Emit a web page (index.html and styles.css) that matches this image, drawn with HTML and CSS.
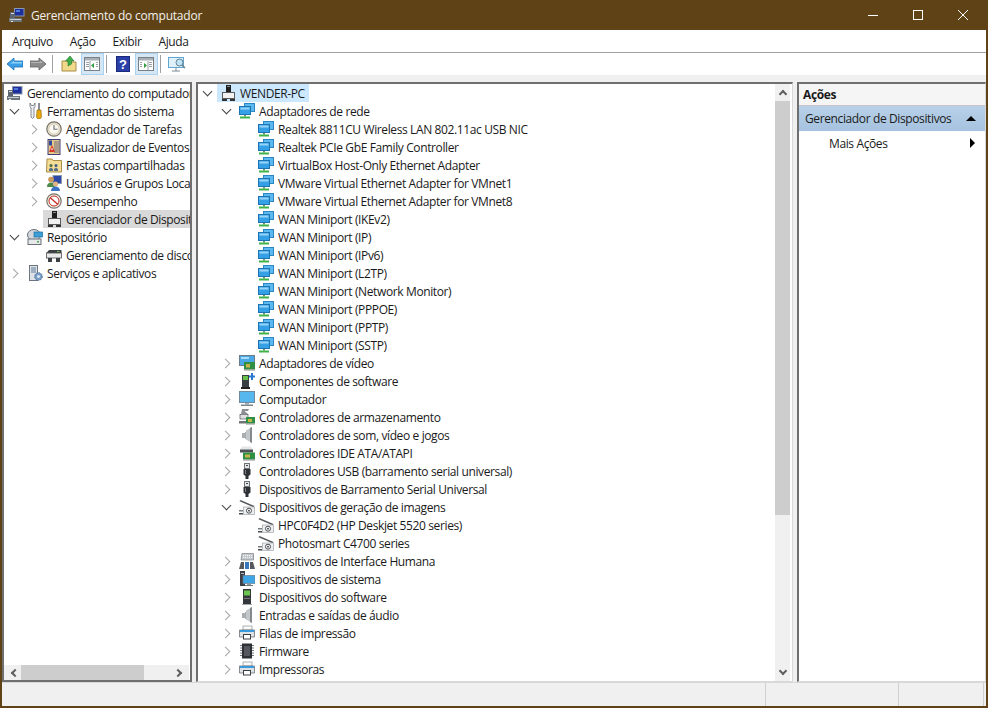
FILE: index.html
```html
<!DOCTYPE html>
<html>
<head>
    <meta charset="utf-8">
    <title>Gerenciamento do computador</title>
    <link rel="stylesheet" href="styles.css">
</head>
<body>
    <svg class="sprites" width="0" height="0">
        <symbol id="i-pc" viewBox="0 0 16 16">
            <rect x="5" y="1" width="10.500" height="8.500" fill="#8d99ad"/>
            <rect x="6" y="2" width="8.500" height="6.500" fill="#1d2f9c"/>
            <rect x="7" y="3" width="4" height="2" fill="#4f7bdc"/>
            <rect x="1" y="5" width="5" height="6" fill="#5d6670"/>
            <rect x="2" y="6" width="3" height="1" fill="#d8dde2"/>
            <rect x="0" y="11" width="13" height="4" fill="#6c747c"/>
            <rect x="1" y="12" width="11" height="1" fill="#c9ced3"/>
            <rect x="2" y="14" width="2" height="1" fill="#e8e8e8"/>
        </symbol>
        <symbol id="i-tools" viewBox="0 0 16 16">
            <path d="M3 0v3.500l1 1.500v9l1.500 1.500L7 14V5l1-1.500V0L6.500 2.500h-2z" fill="#eceff2" stroke="#6b6f75" stroke-width=".8"/>
            <rect x="11" y="0" width="2" height="7" fill="#8b8f95"/>
            <path d="M10 7h4l.5 7-1.500 2h-2l-1.500-2z" fill="#e8a90c" stroke="#8a6100" stroke-width=".6"/>
        </symbol>
        <symbol id="i-clock" viewBox="0 0 16 16">
            <circle cx="8" cy="8" r="7.200" fill="#ece4cc" stroke="#77736a" stroke-width="1.200"/>
            <circle cx="8" cy="8" r="5.200" fill="#faf8f0" stroke="#bdb59c" stroke-width=".6"/>
            <path d="M8 4v4.300h3.500" fill="none" stroke="#6b6f77" stroke-width="1.100"/>
        </symbol>
        <symbol id="i-events" viewBox="0 0 16 16">
            <rect x="2" y="0.500" width="12" height="15" fill="#e6c98a" stroke="#3f3f7c"/>
            <rect x="3" y="1.500" width="3" height="5" fill="#304a9c"/>
            <path d="M8 3h5M8 5h5M8 7h5M8 9h5M8 11h5M8 13h5" stroke="#6d6d8c"/>
            <path d="M6 6l3 7H3z" fill="#d83a2c"/>
            <rect x="5.500" y="9" width="1" height="2" fill="#fff"/>
        </symbol>
        <symbol id="i-shared" viewBox="0 0 16 16">
            <path d="M1 2h5l1 1.500h8.500V15H.500z" fill="#f3dc95" stroke="#a98c47"/>
            <circle cx="5" cy="8.500" r="1.500" fill="#4a6c3c"/>
            <circle cx="10" cy="8.500" r="1.500" fill="#3c5a8c"/>
            <path d="M3 14v-2l2-1.500 2 1.500v2zM8 14v-2l2-1.500 2 1.500v2z" fill="#59708a"/>
        </symbol>
        <symbol id="i-users" viewBox="0 0 16 16">
            <rect x="7" y="0.500" width="8.500" height="8" fill="#2d49a8" stroke="#8d99ad"/>
            <circle cx="5" cy="4.500" r="2.800" fill="#c9975c"/>
            <path d="M1 12c0-3 1.500-4.500 4-4.500S9 9 9 12z" fill="#4d8a4a"/>
            <circle cx="9.500" cy="9" r="2.500" fill="#e0b483"/>
            <path d="M5 16c0-3 2-4.500 4.500-4.500S14 13 14 16z" fill="#3a72c4"/>
        </symbol>
        <symbol id="i-perf" viewBox="0 0 16 16">
            <circle cx="8" cy="8" r="7.200" fill="#f4f0e6" stroke="#77736a" stroke-width="1.200"/>
            <circle cx="8" cy="8" r="5" fill="#fff" stroke="#c22b20"/>
            <path d="M4 4.500l8 7" stroke="#c22b20" stroke-width="1.300"/>
        </symbol>
        <symbol id="i-devmgr" viewBox="0 0 16 16">
            <rect x="6" y="0" width="5" height="7" fill="#1f1f1f"/>
            <rect x="7" y="1" width="3" height="1" fill="#8a8a8a"/>
            <rect x="2.500" y="7.500" width="12" height="6" fill="#f2f2f2" stroke="#5a5a5a"/>
            <rect x="2" y="14" width="5" height="2" fill="#333"/>
            <rect x="10" y="14" width="5" height="2" fill="#333"/>
        </symbol>
        <symbol id="i-repo" viewBox="0 0 16 16">
            <ellipse cx="7" cy="6" rx="6.500" ry="5.500" fill="#d4d8dc" stroke="#69707a"/>
            <rect x="7" y="3" width="8.500" height="5" fill="#3b9ed6" stroke="#1d6f9e" stroke-width=".7"/>
            <rect x="1" y="10" width="13" height="5.500" fill="#e6e8ea" stroke="#69707a"/>
            <rect x="10" y="12" width="2" height="1.500" fill="#45a84c"/>
        </symbol>
        <symbol id="i-disk" viewBox="0 0 16 16">
            <path d="M3 3h12.500v3H.500z" fill="#3c3f42"/>
            <rect x="11" y="4" width="2.500" height="1" fill="#67c04e"/>
            <rect x=".5" y="6" width="15" height="5" fill="#e8e8e8" stroke="#4d4d4d" stroke-width=".8"/>
            <rect x="2" y="11" width="4" height="4" fill="#3c3f42"/>
            <rect x="10" y="11" width="4" height="4" fill="#3c3f42"/>
        </symbol>
        <symbol id="i-services" viewBox="0 0 16 16">
            <rect x="2.500" y="0.500" width="8" height="15" fill="#dfe3e7" stroke="#6d7680"/>
            <path d="M4 3h5M4 5h5M4 7h5" stroke="#5f7c9e"/>
            <circle cx="11.500" cy="11.500" r="3.800" fill="#7aa0c9" stroke="#4b6c92" stroke-dasharray="1.500 1"/>
            <circle cx="11.500" cy="11.500" r="1.300" fill="#f2f6fa"/>
        </symbol>
        <symbol id="i-net" viewBox="0 0 16 16">
            <rect x="5.500" y="0.500" width="10" height="8" fill="#5cb9f0" stroke="#2a86c4"/>
            <rect x="0.500" y="3.500" width="11" height="8" fill="#35a0e6" stroke="#1b74b4"/>
            <rect x="1.500" y="4.500" width="9" height="2" fill="#96d5f8"/>
            <rect x="5" y="12" width="2" height="1.500" fill="#6e8f6a"/>
            <rect x="1" y="13.500" width="10" height="2" fill="#3fb44a"/>
        </symbol>
        <symbol id="i-video" viewBox="0 0 16 16">
            <rect x="0.500" y="0.500" width="15" height="10" fill="#4aa8e6" stroke="#6a7d8c"/>
            <rect x="2" y="2" width="8" height="2" fill="#a8dbf7"/>
            <rect x="5" y="7" width="11" height="7.500" fill="#2f8f45"/>
            <rect x="7" y="9" width="4" height="3.500" fill="#c9b44a"/>
            <rect x="5" y="14.500" width="11" height="1" fill="#8e8e8e"/>
        </symbol>
        <symbol id="i-softcomp" viewBox="0 0 16 16">
            <rect x="3" y="2" width="7" height="12" fill="#3a3f44"/>
            <rect x="4" y="3" width="5" height="4" fill="#66c24a"/>
            <rect x="2" y="14" width="9" height="2" fill="#222"/>
            <path d="M12 0v2.500h-2v2h2V7h2V4.500h2v-2h-2V0z" fill="#2a78d0"/>
        </symbol>
        <symbol id="i-computer" viewBox="0 0 16 16">
            <rect x="0.500" y="0.500" width="15" height="11" fill="#56b7ef" stroke="#6d8ca2"/>
            <rect x="6" y="12" width="4" height="1.500" fill="#a8aeb3"/>
            <rect x="2" y="13.500" width="12" height="1.500" fill="#7c858c"/>
        </symbol>
        <symbol id="i-storage" viewBox="0 0 16 16">
            <path d="M3 0h7l-1 2H5.500L9 5H2z" fill="#8b8f94"/>
            <rect x="1" y="5.500" width="8" height="4.500" fill="#dddfe1" stroke="#53585e" stroke-width=".7"/>
            <rect x="7" y="8" width="9" height="6.500" fill="#2f8f45"/>
            <rect x="9" y="10" width="4" height="3" fill="#c9b44a"/>
            <rect x="0" y="12" width="7" height="2.500" fill="#707478"/>
            <rect x="7" y="14.500" width="9" height="1" fill="#8e8e8e"/>
        </symbol>
        <symbol id="i-sound" viewBox="0 0 16 16">
            <path d="M3 6h3V5h1v7H6v-1H3z" fill="#a9adb1"/>
            <path d="M7 3.500L13 0v16l-6-3.500z" fill="#c3c7ca"/>
            <path d="M11 1l2-1v16l-2-1z" fill="#84898e"/>
        </symbol>
        <symbol id="i-ide" viewBox="0 0 16 16">
            <path d="M3 1.500h9l2 3H1z" fill="#e4e6e8"/>
            <rect x="1" y="4.500" width="13" height="3" fill="#4f5357"/>
            <rect x="4" y="7.500" width="12" height="7" fill="#2f8f45"/>
            <rect x="6" y="9.500" width="5" height="3" fill="#c9b44a"/>
            <rect x="4" y="14.500" width="12" height="1" fill="#8e8e8e"/>
        </symbol>
        <symbol id="i-usb" viewBox="0 0 16 16">
            <rect x="5.500" y="0.500" width="5" height="5" fill="#e2e4e6" stroke="#707478"/>
            <rect x="7" y="2" width="2" height="1" fill="#444"/>
            <path d="M4.500 6h7v5.500l-2 1.500v3h-3v-3l-2-1.500z" fill="#2e3135"/>
            <rect x="6" y="7" width="1" height="4" fill="#7b8086"/>
        </symbol>
        <symbol id="i-imaging" viewBox="0 0 16 16">
            <path d="M1.500 1l14 6-1 1.200L.5 2.200z" fill="#55595d"/>
            <rect x="4.500" y="8" width="11" height="7.500" fill="#eceeef" stroke="#a1a5a9" stroke-width=".7"/>
            <circle cx="10" cy="11.700" r="2.500" fill="#fff" stroke="#474b4f"/>
            <circle cx="10" cy="11.700" r=".9" fill="#333"/>
            <rect x="0" y="11" width="4" height="1.500" fill="#787c80"/>
            <rect x="0" y="14" width="4" height="1.500" fill="#45494d"/>
        </symbol>
        <symbol id="i-hid" viewBox="0 0 16 16">
            <path d="M3 .5h11.500V7H2z" fill="#c4c9ce" stroke="#7b8187" stroke-width=".7"/>
            <path d="M4 2.500h9M4 4.500h9" stroke="#f2f4f6" stroke-dasharray="1 1"/>
            <path d="M0 16l2-7h3v7z" fill="#55595e"/>
            <path d="M6 16V9h4v7z" fill="#3778bc"/>
            <path d="M11 16V9h3l2 7z" fill="#55595e"/>
        </symbol>
        <symbol id="i-system" viewBox="0 0 16 16">
            <rect x="1" y="0" width="5" height="15" fill="#3c4046"/>
            <rect x="2" y="2" width="3" height="1" fill="#b8bcc0"/>
            <rect x="4" y="4.500" width="12" height="8" fill="#3ea6e6" stroke="#6a7d8c" stroke-width=".7"/>
            <rect x="8" y="12.500" width="4" height="1.500" fill="#90979d"/>
            <rect x="6" y="14" width="8" height="1" fill="#6f777d"/>
        </symbol>
        <symbol id="i-swdev" viewBox="0 0 16 16">
            <rect x="4" y="0" width="8" height="15" fill="#33373c"/>
            <rect x="5" y="1.500" width="6" height="5" fill="#6cc54e"/>
            <rect x="5" y="9" width="6" height="1" fill="#777"/>
            <rect x="3" y="15" width="10" height="1" fill="#a5a9ad"/>
        </symbol>
        <symbol id="i-printer" viewBox="0 0 16 16">
            <rect x="4" y="1" width="9" height="4" fill="#fafafa" stroke="#8d9196" stroke-width=".7"/>
            <path d="M.5 5h15v7H.5z" fill="#dfe2e5" stroke="#5a6068" stroke-width=".7"/>
            <rect x="1" y="5" width="14" height="2" fill="#3a9ade"/>
            <rect x="4" y="9" width="8" height="5.500" fill="#3b3f44"/>
            <rect x="5" y="10" width="6" height="3.500" fill="#fff"/>
        </symbol>
        <symbol id="i-firmware" viewBox="0 0 16 16">
            <rect x="3" y="0.500" width="10" height="15" fill="#2d3034"/>
            <path d="M1 2.500h2M1 5h2M1 7.500h2M1 10h2M1 12.500h2M13 2.500h2M13 5h2M13 7.500h2M13 10h2M13 12.500h2" stroke="#75797e"/>
            <rect x="5" y="3" width="6" height="10" fill="#54585d"/>
        </symbol>
    </svg>

    <div class="window">
        <div class="titlebar">
            <svg class="icon"><use href="#i-pc"/></svg>
            <span class="title">Gerenciamento do computador</span>
            <div class="win-buttons">
                <svg class="win-btn" viewBox="0 0 10 10"><path d="M0 5.500h10" stroke="#fff"/></svg>
                <svg class="win-btn" viewBox="0 0 10 10"><rect x=".5" y=".5" width="9" height="9" fill="none" stroke="#fff"/></svg>
                <svg class="win-btn" viewBox="0 0 10 10"><path d="M0 0l10 10M10 0L0 10" stroke="#fff"/></svg>
            </div>
        </div>

        <div class="menubar">
            <span>Arquivo</span>
            <span>Ação</span>
            <span>Exibir</span>
            <span>Ajuda</span>
        </div>

        <div class="toolbar">
            <button class="tool"><svg viewBox="0 0 16 16"><path d="M0 8l7-6v3h9v6H7v3z" fill="#3b9fe6" stroke="#1f6fb5" stroke-width=".8"/><path d="M3 8l4-3.500V6h8v1.500H5z" fill="#8fd0f7"/></svg></button>
            <button class="tool"><svg viewBox="0 0 16 16"><path d="M16 8L9 2v3H0v6h9v3z" fill="#8c8c8c" stroke="#5f5f5f" stroke-width=".8"/><path d="M1 6h9V4.500L13 7H1z" fill="#b5b5b5"/></svg></button>
            <i class="tool-sep"></i>
            <button class="tool"><svg viewBox="0 0 16 16"><path d="M1 5h5l1 1h8v9H1z" fill="#f0d98a" stroke="#a98c47"/><path d="M7 10V5H4.500L9 0l4 5h-2.500v3z" fill="#3fae49" stroke="#24782c" stroke-width=".6"/></svg></button>
            <button class="tool on"><svg viewBox="0 0 16 16"><rect x=".5" y="1.500" width="15" height="13" fill="#fff" stroke="#7a7f86"/><rect x="1" y="2" width="14" height="2.500" fill="#a9afb6"/><path d="M6 5v9" stroke="#9aa0a6"/><path d="M2 6.500h3M2 8.500h3M2 10.500h3M12 6.500h2M12 8.500h2M12 10.500h2" stroke="#9aa0a6"/><path d="M10 7v5L7 9.500z" fill="#2f9c3e"/></svg></button>
            <i class="tool-sep"></i>
            <button class="tool"><svg viewBox="0 0 16 16"><rect x="1.500" y="0.500" width="13" height="15" fill="#2a3fa8" stroke="#1a2a78"/><text class="help-mark" x="8" y="13" text-anchor="middle">?</text></svg></button>
            <button class="tool on"><svg viewBox="0 0 16 16"><rect x=".5" y="1.500" width="15" height="13" fill="#fff" stroke="#7a7f86"/><rect x="1" y="2" width="14" height="2.500" fill="#a9afb6"/><path d="M10 5v9" stroke="#9aa0a6"/><path d="M2 6.500h2M2 8.500h2M2 10.500h2M11 6.500h3M11 8.500h3M11 10.500h3" stroke="#9aa0a6"/><path d="M6 7v5l3-2.500z" fill="#2f9c3e"/></svg></button>
            <i class="tool-sep"></i>
            <button class="tool"><svg viewBox="0 0 18 16"><rect x="0.500" y="1.500" width="15" height="10" fill="#dff1fb" stroke="#5fa8d4"/><path d="M4 15h8M8 11.500V15" stroke="#7d8a94"/><circle cx="11.500" cy="6.500" r="3.500" fill="#bfe4f7" stroke="#66828f"/><path d="M14 9l3 3" stroke="#66828f" stroke-width="1.500"/></svg></button>
        </div>

        <div class="panes">
            <div class="pane side">
                <div class="tree">
                    <div class="row"><span class="item"><svg class="icon"><use href="#i-pc"/></svg>Gerenciamento do computador</span></div>
                    <div class="row lv1"><b class="twist open"></b><span class="item"><svg class="icon"><use href="#i-tools"/></svg>Ferramentas do sistema</span></div>
                    <div class="row lv2"><b class="twist"></b><span class="item"><svg class="icon"><use href="#i-clock"/></svg>Agendador de Tarefas</span></div>
                    <div class="row lv2"><b class="twist"></b><span class="item"><svg class="icon"><use href="#i-events"/></svg>Visualizador de Eventos</span></div>
                    <div class="row lv2"><b class="twist"></b><span class="item"><svg class="icon"><use href="#i-shared"/></svg>Pastas compartilhadas</span></div>
                    <div class="row lv2"><b class="twist"></b><span class="item"><svg class="icon"><use href="#i-users"/></svg>Usuários e Grupos Locais</span></div>
                    <div class="row lv2"><b class="twist"></b><span class="item"><svg class="icon"><use href="#i-perf"/></svg>Desempenho</span></div>
                    <div class="row lv2"><b class="twist none"></b><span class="item selected"><svg class="icon"><use href="#i-devmgr"/></svg>Gerenciador de Dispositivos</span></div>
                    <div class="row lv1"><b class="twist open"></b><span class="item"><svg class="icon"><use href="#i-repo"/></svg>Repositório</span></div>
                    <div class="row lv2"><b class="twist none"></b><span class="item"><svg class="icon"><use href="#i-disk"/></svg>Gerenciamento de discos</span></div>
                    <div class="row lv1"><b class="twist"></b><span class="item"><svg class="icon"><use href="#i-services"/></svg>Serviços e aplicativos</span></div>
                </div>
                <div class="hscroll">
                    <span class="arrow left"></span>
                    <div class="hthumb"></div>
                    <span class="arrow right"></span>
                </div>
            </div>

            <div class="pane center">
                <div class="tree">
                    <div class="row"><b class="twist open"></b><span class="item root"><svg class="icon"><use href="#i-devmgr"/></svg>WENDER-PC</span></div>
                    <div class="row lv1"><b class="twist open"></b><span class="item"><svg class="icon"><use href="#i-net"/></svg>Adaptadores de rede</span></div>
                    <div class="row lv2"><b class="twist none"></b><span class="item"><svg class="icon"><use href="#i-net"/></svg>Realtek 8811CU Wireless LAN 802.11ac USB NIC</span></div>
                    <div class="row lv2"><b class="twist none"></b><span class="item"><svg class="icon"><use href="#i-net"/></svg>Realtek PCIe GbE Family Controller</span></div>
                    <div class="row lv2"><b class="twist none"></b><span class="item"><svg class="icon"><use href="#i-net"/></svg>VirtualBox Host-Only Ethernet Adapter</span></div>
                    <div class="row lv2"><b class="twist none"></b><span class="item"><svg class="icon"><use href="#i-net"/></svg>VMware Virtual Ethernet Adapter for VMnet1</span></div>
                    <div class="row lv2"><b class="twist none"></b><span class="item"><svg class="icon"><use href="#i-net"/></svg>VMware Virtual Ethernet Adapter for VMnet8</span></div>
                    <div class="row lv2"><b class="twist none"></b><span class="item"><svg class="icon"><use href="#i-net"/></svg>WAN Miniport (IKEv2)</span></div>
                    <div class="row lv2"><b class="twist none"></b><span class="item"><svg class="icon"><use href="#i-net"/></svg>WAN Miniport (IP)</span></div>
                    <div class="row lv2"><b class="twist none"></b><span class="item"><svg class="icon"><use href="#i-net"/></svg>WAN Miniport (IPv6)</span></div>
                    <div class="row lv2"><b class="twist none"></b><span class="item"><svg class="icon"><use href="#i-net"/></svg>WAN Miniport (L2TP)</span></div>
                    <div class="row lv2"><b class="twist none"></b><span class="item"><svg class="icon"><use href="#i-net"/></svg>WAN Miniport (Network Monitor)</span></div>
                    <div class="row lv2"><b class="twist none"></b><span class="item"><svg class="icon"><use href="#i-net"/></svg>WAN Miniport (PPPOE)</span></div>
                    <div class="row lv2"><b class="twist none"></b><span class="item"><svg class="icon"><use href="#i-net"/></svg>WAN Miniport (PPTP)</span></div>
                    <div class="row lv2"><b class="twist none"></b><span class="item"><svg class="icon"><use href="#i-net"/></svg>WAN Miniport (SSTP)</span></div>
                    <div class="row lv1"><b class="twist"></b><span class="item"><svg class="icon"><use href="#i-video"/></svg>Adaptadores de vídeo</span></div>
                    <div class="row lv1"><b class="twist"></b><span class="item"><svg class="icon"><use href="#i-softcomp"/></svg>Componentes de software</span></div>
                    <div class="row lv1"><b class="twist"></b><span class="item"><svg class="icon"><use href="#i-computer"/></svg>Computador</span></div>
                    <div class="row lv1"><b class="twist"></b><span class="item"><svg class="icon"><use href="#i-storage"/></svg>Controladores de armazenamento</span></div>
                    <div class="row lv1"><b class="twist"></b><span class="item"><svg class="icon"><use href="#i-sound"/></svg>Controladores de som, vídeo e jogos</span></div>
                    <div class="row lv1"><b class="twist"></b><span class="item"><svg class="icon"><use href="#i-ide"/></svg>Controladores IDE ATA/ATAPI</span></div>
                    <div class="row lv1"><b class="twist"></b><span class="item"><svg class="icon"><use href="#i-usb"/></svg>Controladores USB (barramento serial universal)</span></div>
                    <div class="row lv1"><b class="twist"></b><span class="item"><svg class="icon"><use href="#i-usb"/></svg>Dispositivos de Barramento Serial Universal</span></div>
                    <div class="row lv1"><b class="twist open"></b><span class="item"><svg class="icon"><use href="#i-imaging"/></svg>Dispositivos de geração de imagens</span></div>
                    <div class="row lv2"><b class="twist none"></b><span class="item"><svg class="icon"><use href="#i-imaging"/></svg>HPC0F4D2 (HP Deskjet 5520 series)</span></div>
                    <div class="row lv2"><b class="twist none"></b><span class="item"><svg class="icon"><use href="#i-imaging"/></svg>Photosmart C4700 series</span></div>
                    <div class="row lv1"><b class="twist"></b><span class="item"><svg class="icon"><use href="#i-hid"/></svg>Dispositivos de Interface Humana</span></div>
                    <div class="row lv1"><b class="twist"></b><span class="item"><svg class="icon"><use href="#i-system"/></svg>Dispositivos de sistema</span></div>
                    <div class="row lv1"><b class="twist"></b><span class="item"><svg class="icon"><use href="#i-swdev"/></svg>Dispositivos do software</span></div>
                    <div class="row lv1"><b class="twist"></b><span class="item"><svg class="icon"><use href="#i-sound"/></svg>Entradas e saídas de áudio</span></div>
                    <div class="row lv1"><b class="twist"></b><span class="item"><svg class="icon"><use href="#i-printer"/></svg>Filas de impressão</span></div>
                    <div class="row lv1"><b class="twist"></b><span class="item"><svg class="icon"><use href="#i-firmware"/></svg>Firmware</span></div>
                    <div class="row lv1"><b class="twist"></b><span class="item"><svg class="icon"><use href="#i-printer"/></svg>Impressoras</span></div>
                </div>
                <div class="vscroll">
                    <span class="arrow up"></span>
                    <div class="vthumb"></div>
                    <span class="arrow down"></span>
                </div>
            </div>

            <div class="pane actions">
                <div class="act-head">Ações</div>
                <div class="act-group">
                    <span>Gerenciador de Dispositivos</span>
                    <i class="tri-up"></i>
                </div>
                <div class="act-item">
                    <span>Mais Ações</span>
                    <i class="tri-right"></i>
                </div>
            </div>
        </div>

        <div class="statusbar">
            <div class="cell wide"></div>
            <div class="cell mid"></div>
            <div class="cell last"></div>
        </div>
    </div>
</body>
</html>
```

FILE: styles.css
```css
* {
    box-sizing: border-box;
}

body {
    margin: 0;
    font-family: "Open Sans", "Liberation Sans", sans-serif;
    font-size: 12px;
    letter-spacing: -0.38px;
    color: #1a1a1a;
    overflow: hidden;
}

.sprites {
    position: absolute;
}

.window {
    width: 988px;
    height: 708px;
    display: flex;
    flex-direction: column;
    background: #f0f0f0;
    border: 2px solid #5f4316;
    border-top: 0;
}

.icon {
    width: 16px;
    height: 16px;
    flex: none;
}

/* title bar */

.titlebar {
    height: 30px;
    margin: 0 -2px;
    padding-left: 9px;
    display: flex;
    align-items: center;
    gap: 6px;
    background: #5f4316;
    color: #fff;
}

.title {
    letter-spacing: -0.2px;
    opacity: 0.92;
}

.win-buttons {
    margin-left: auto;
    display: flex;
    gap: 35px;
    padding-right: 20px;
}

.win-btn {
    width: 10px;
    height: 10px;
}

/* menu and toolbar */

.menubar {
    height: 23px;
    padding-left: 4px;
    display: flex;
    align-items: center;
    background: #fff;
    border-bottom: 1px solid #a0a0a0;
}

.menubar span {
    padding: 0 6px;
    margin-right: 5px;
}

.toolbar {
    height: 22px;
    padding-left: 1.5px;
    display: flex;
    align-items: center;
    background: #fff;
}

.tool {
    width: 23px;
    height: 22px;
    padding: 0;
    margin: 0;
    border: 1px solid transparent;
    background: none;
    display: flex;
    align-items: center;
    justify-content: center;
}

.tool svg {
    width: 16px;
    height: 16px;
}

.tool:last-child svg {
    width: 18px;
}

.tool.on {
    background: #d5e6f5;
    border-color: #a9d2f0;
}

.tool-sep {
    width: 1px;
    height: 18px;
    margin: 0 4.5px 0 2.5px;
    background: #a0a0a0;
}

.help-mark {
    font-family: "Liberation Sans", sans-serif;
    font-size: 13px;
    font-weight: bold;
    fill: #fff;
}

/* panes */

.panes {
    flex: 1;
    min-height: 0;
    padding-top: 7px;
    display: flex;
    gap: 4px;
}

.pane {
    position: relative;
    background: #fff;
    border: 1px solid #fff;
    border-top: 2px solid #6f6f6f;
    border-left: 2px solid #6f6f6f;
    border-bottom-color: #d8d8d8;
    border-right-color: #d8d8d8;
    display: flex;
    overflow: hidden;
}

.side {
    width: 190px;
    flex-direction: column;
    border-right: 2px solid #6f6f6f;
    border-bottom: 2px solid #6f6f6f;
}

.center {
    width: 597px;
}

.actions {
    width: 189px;
    flex-direction: column;
}

.tree {
    flex: 1;
    min-width: 0;
    overflow: hidden;
}

.row {
    height: 18px;
    display: flex;
    align-items: center;
    white-space: nowrap;
}

.lv1 {
    padding-left: 19px;
}

.lv2 {
    padding-left: 38px;
}

.side .lv1 {
    padding-left: 1px;
}

.side .lv2 {
    padding-left: 20px;
}

.item {
    height: 18px;
    padding: 0 4px 0 3px;
    display: flex;
    align-items: center;
    gap: 4px;
}

.root {
    background: #cce8ff;
}

.selected {
    flex: 1;
    background: #d9d9d9;
}

/* chevrons */

.twist {
    width: 19px;
    height: 18px;
    flex: none;
    position: relative;
}

.twist::after {
    content: "";
    position: absolute;
    left: 5px;
    top: 6px;
    width: 6px;
    height: 6px;
    border-top: 1.5px solid #a6a6a6;
    border-right: 1.5px solid #a6a6a6;
    transform: rotate(45deg);
}

.twist.open::after {
    left: 6px;
    top: 4px;
    border-color: #404040;
    transform: rotate(135deg);
}

.twist.none::after {
    display: none;
}

/* scrollbars */

.hscroll {
    height: 15px;
    flex: none;
    margin: 0 1px 0 0;
    padding: 0 14px 0 15px;
    display: flex;
    align-items: center;
    position: relative;
    background: #f0f0f0;
}

.hthumb {
    width: 123px;
    height: 15px;
    margin-left: 2px;
    background: #cdcdcd;
}

.vscroll {
    width: 15px;
    flex: none;
    margin-right: 2px;
    position: relative;
    background: #f0f0f0;
}

.vthumb {
    height: 414px;
    margin-top: 17px;
    background: #cdcdcd;
}

.arrow {
    position: absolute;
    width: 6px;
    height: 6px;
    border-top: 2px solid #606060;
    border-right: 2px solid #606060;
}

.arrow.left {
    left: 8px;
    top: 5px;
    transform: rotate(-135deg);
}

.arrow.right {
    right: 8px;
    top: 5px;
    transform: rotate(45deg);
}

.arrow.up {
    left: 5px;
    top: 7px;
    transform: rotate(-45deg);
}

.arrow.down {
    left: 5px;
    bottom: 7px;
    transform: rotate(135deg);
}

/* actions pane */

.act-head {
    height: 22px;
    padding-left: 4px;
    display: flex;
    align-items: center;
    font-weight: bold;
    background: #f5f5f5;
    border-bottom: 1px solid #c8c8c8;
}

.act-group {
    height: 25px;
    padding: 0 9px 0 6px;
    display: flex;
    align-items: center;
    justify-content: space-between;
    background: linear-gradient(#b9d1e9, #a5c2df);
}

.act-item {
    height: 24px;
    padding: 0 10px 0 30px;
    display: flex;
    align-items: center;
    justify-content: space-between;
}

.tri-up {
    width: 0;
    height: 0;
    border-left: 5px solid transparent;
    border-right: 5px solid transparent;
    border-bottom: 5px solid #000;
}

.tri-right {
    width: 0;
    height: 0;
    border-top: 5px solid transparent;
    border-bottom: 5px solid transparent;
    border-left: 5px solid #000;
}

/* status bar */

.statusbar {
    height: 24px;
    display: flex;
    border-top: 1px solid #d8d8d8;
}

.cell {
    border-right: 1px solid #d0d0d0;
}

.wide {
    width: 764px;
}

.mid {
    width: 133px;
}

.last {
    width: 85px;
}
```
